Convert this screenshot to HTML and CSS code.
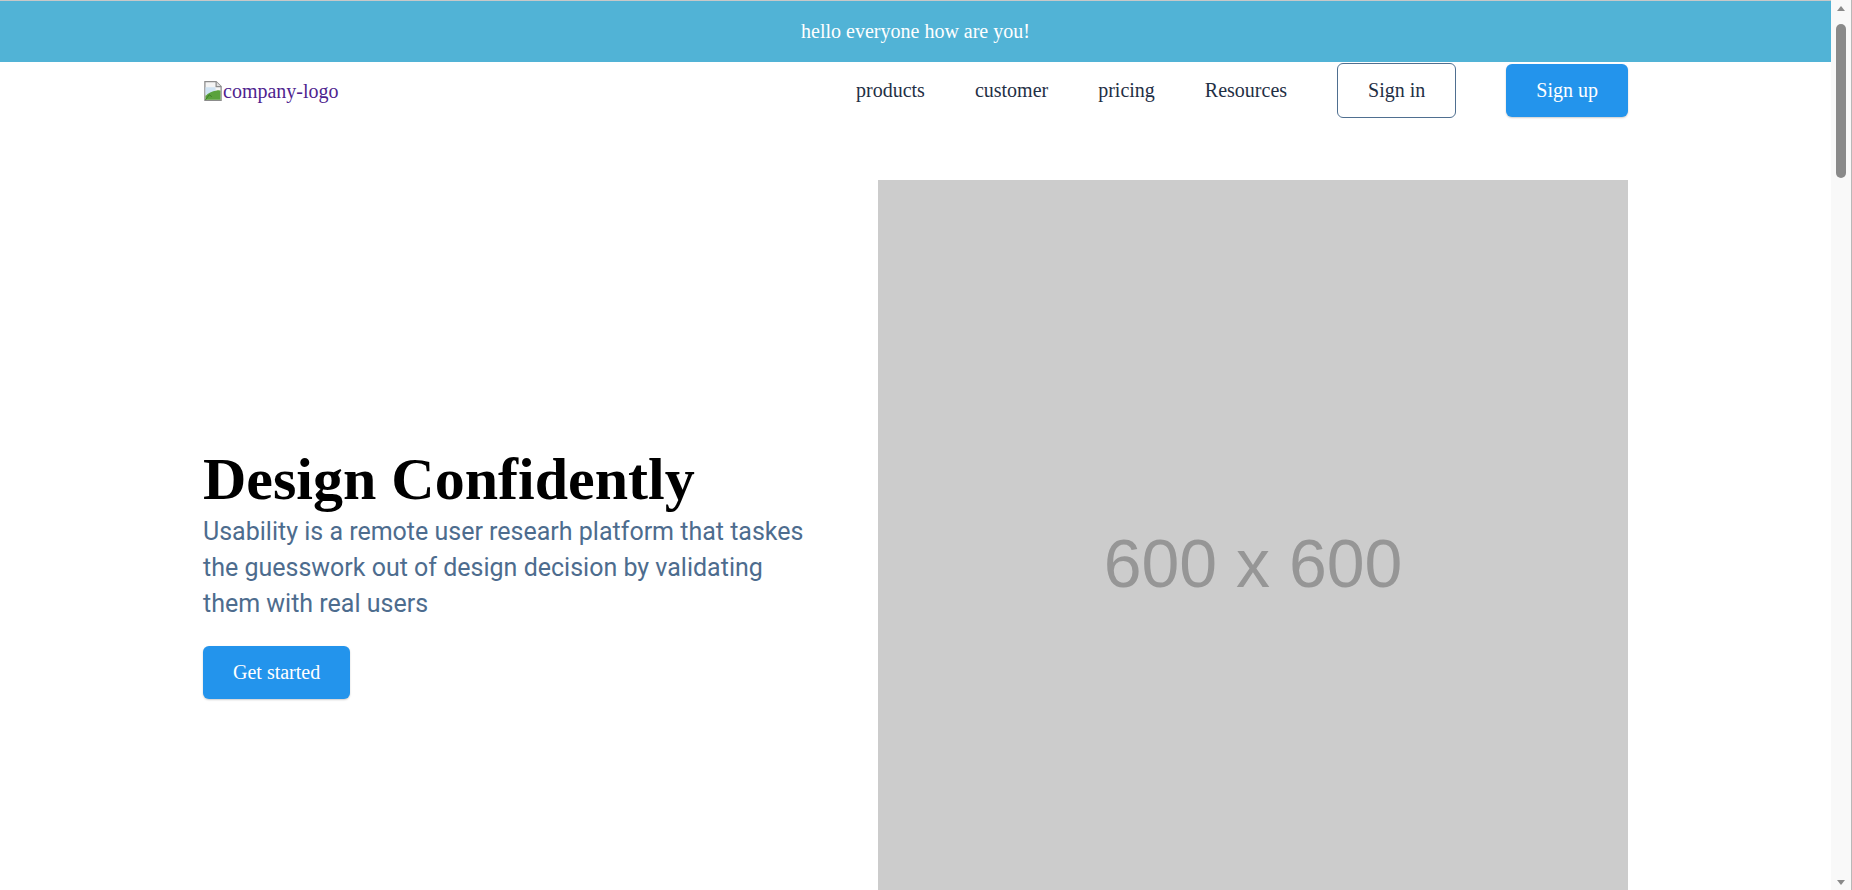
FILE: index.html
```html
<!DOCTYPE html>
<html lang="en">
<head>
<meta charset="utf-8">
<title>Usability</title>
<link rel="stylesheet" href="styles.css">
</head>
<body>
<div class="page">
  <div class="banner">hello everyone how are you!</div>
  <header class="container nav">
    <a class="logo" href="#">
      <svg class="broken" width="20" height="20" viewBox="0 0 16 16" aria-hidden="true">
        <path d="M1.5 0.5h9l4 4v11h-13z" fill="#f4f4f4" stroke="#8c8c8c"/>
        <path d="M10.5 0.5v4h4" fill="#e0e0e0" stroke="#8c8c8c"/>
        <path d="M2 5h8v6H2z" fill="#cfe3f3"/>
        <path d="M2 15V12c2-2.5 5-4 9-4.5 1.5-.2 2.8 0 3 .3V15z" fill="#5aa23c"/>
        <path d="M2 15l3-4 2 1.5" fill="none" stroke="#3e7d27" stroke-width="0.8"/>
      </svg><span>company-logo</span>
    </a>
    <nav class="menu">
      <a href="#" class="link">products</a>
      <a href="#" class="link">customer</a>
      <a href="#" class="link">pricing</a>
      <a href="#" class="link">Resources</a>
      <button class="btn btn-outline">Sign in</button>
      <button class="btn btn-primary">Sign up</button>
    </nav>
  </header>
  <main class="container hero">
    <div class="hero-text">
      <h1 class="title">Design Confidently</h1>
      <p class="lead">Usability is a remote user researh platform that taskes the guesswork out of design decision by validating them with real users</p>
      <button class="btn btn-primary btn-start">Get started</button>
    </div>
    <div class="placeholder"><span>600 x 600</span></div>
  </main>
</div>
<div class="scrollbar" aria-hidden="true">
  <span class="arrow arrow-up"></span>
  <span class="thumb"></span>
  <span class="arrow arrow-down"></span>
</div>
</body>
</html>
```

FILE: styles.css
```css
html {
  overflow: hidden;
}

body {
  margin: 0;
  background: #ffffff;
  font-family: "Liberation Serif", "Times New Roman", serif;
  border-top: 1px solid #c8c8c8;
}

.page {
  width: 1831px;
}

.banner {
  background: #51b3d6;
  color: #ffffff;
  font-size: 20px;
  line-height: 23px;
  text-align: center;
  padding: 19px 0;
}

.container {
  width: 1425px;
  margin: 0 auto;
}

.nav {
  display: flex;
  justify-content: space-between;
  align-items: center;
  height: 56px;
  padding-top: 1px;
  box-sizing: border-box;
}

.logo {
  display: flex;
  align-items: center;
  color: #4f1f8f;
  text-decoration: none;
  font-size: 20px;
  margin-top: 1px;
}

.broken {
  flex-shrink: 0;
}

.menu {
  display: flex;
  align-items: center;
  gap: 50px;
}

.link {
  color: #1f2f45;
  text-decoration: none;
  font-size: 20px;
  line-height: 23px;
}

.btn {
  font-family: "Liberation Serif", "Times New Roman", serif;
  font-size: 20px;
  line-height: 23px;
  padding: 15px 30px;
  border-radius: 6px;
  cursor: pointer;
}

.btn-outline {
  background: #ffffff;
  color: #1f2f45;
  border: 1px solid #4f6f90;
}

.btn-primary {
  background: #2394ec;
  color: #ffffff;
  border: none;
  box-shadow: 0 1px 2px rgba(0, 0, 0, 0.2);
}

.hero {
  display: flex;
  justify-content: space-between;
  margin-top: 62px;
}

.hero-text {
  align-self: center;
  margin-top: 34px;
}

.title {
  margin: 0;
  font-size: 60px;
  font-weight: bold;
  color: #000000;
}

.lead {
  margin: 0;
  max-width: 612px;
  font-family: Roboto, "Liberation Sans", sans-serif;
  font-size: 25px;
  line-height: 36px;
  color: #4d6c8e;
}

.btn-start {
  margin-top: 24px;
}

.placeholder {
  width: 750px;
  height: 750px;
  flex-shrink: 0;
  background: #cccccc;
  display: flex;
  align-items: center;
  justify-content: center;
  box-sizing: border-box;
  padding-top: 16px;
}

.placeholder span {
  font-family: "Liberation Sans", Arial, sans-serif;
  font-size: 68px;
  color: #969696;
}

.scrollbar {
  position: fixed;
  top: 0;
  right: 0;
  width: 21px;
  height: 100%;
  background: #f9f9f9;
  border-right: 1px solid #b8b8b8;
  box-sizing: border-box;
}

.thumb {
  position: absolute;
  left: 5px;
  top: 24px;
  width: 10px;
  height: 154px;
  border-radius: 5px;
  background: #8a8a8a;
}

.arrow {
  position: absolute;
  left: 6px;
  width: 0;
  height: 0;
  border-left: 4px solid transparent;
  border-right: 4px solid transparent;
}

.arrow-up {
  top: 6px;
  border-bottom: 5px solid #8a8a8a;
}

.arrow-down {
  bottom: 5px;
  border-top: 5px solid #8a8a8a;
}
```
